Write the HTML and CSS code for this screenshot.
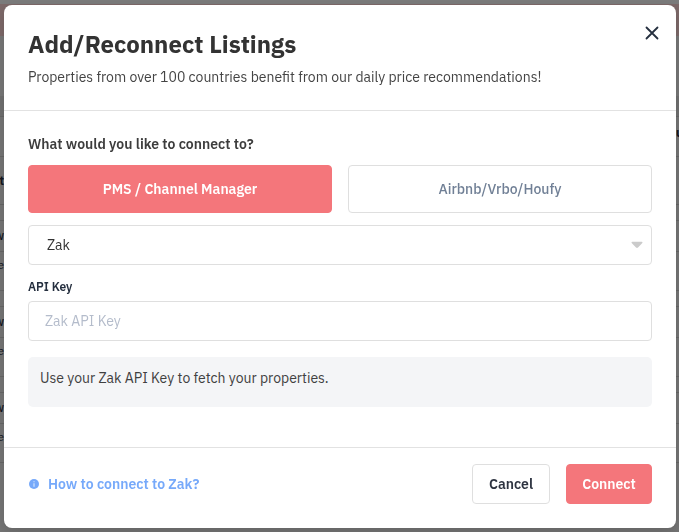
FILE: index.html
```html
<!DOCTYPE html>
<html lang="en">
<head>
    <meta charset="UTF-8">
    <meta name="viewport" content="width=device-width, initial-scale=1.0">
    <title>Add/Reconnect Listings</title>
    <link rel="stylesheet" href="styles.css">
</head>
<body>
    <div class="page">
        <div class="topbar"></div>
        <div class="banner"></div>
        <div class="toolbar"></div>
        <div class="filters"><span>u</span></div>
        <div class="gap"></div>
        <div class="table-head"><span>t</span></div>
        <div class="gap"></div>
        <div class="row name"><span>w</span></div>
        <div class="row"><span>e</span></div>
        <div class="gap"></div>
        <div class="row name"><span>w</span></div>
        <div class="row"><span>e</span></div>
        <div class="gap"></div>
        <div class="row name"><span>w</span></div>
        <div class="row"><span>e</span></div>
    </div>
    <div class="overlay">
        <div class="modal">
            <div class="modal-header">
                <div>
                    <h1>Add/Reconnect Listings</h1>
                    <p>Properties from over 100 countries benefit from our daily price recommendations!</p>
                </div>
                <button class="close" aria-label="Close">
                    <svg width="14" height="14" viewBox="0 0 14 14"><path d="M1.5 1.5l11 11M12.5 1.5l-11 11" stroke="#252f3f" stroke-width="1.8" stroke-linecap="round"/></svg>
                </button>
            </div>
            <div class="modal-body">
                <h2>What would you like to connect to?</h2>
                <div class="tabs">
                    <button class="tab active"><span>PMS / Channel Manager</span></button>
                    <button class="tab"><span>Airbnb/Vrbo/Houfy</span></button>
                </div>
                <div class="select">
                    <span>Zak</span>
                    <svg width="12" height="8" viewBox="0 0 12 8"><path d="M1.3.7h9.4q1.2.2.6 1.3L7 6.6q-1 .9-2 0L.7 2Q.1.9 1.3.7z" fill="#cbcbcb"/></svg>
                </div>
                <label class="field-label" for="apiKey"><span>API Key</span></label>
                <input id="apiKey" class="field" type="text" placeholder="Zak API Key">
                <div class="note"><span>Use your Zak API Key to fetch your properties.</span></div>
            </div>
            <div class="modal-footer">
                <a class="help" href="#">
                    <svg width="10" height="10" viewBox="0 0 10 10"><circle cx="5" cy="5" r="5" fill="#76a9fa"/><path d="M5 2.2v1M5 4.2v3.5" stroke="#c9dffd" stroke-width="1.3"/></svg>
                    <span>How to connect to Zak?</span>
                </a>
                <div class="actions">
                    <button class="btn cancel"><span>Cancel</span></button>
                    <button class="btn connect"><span>Connect</span></button>
                </div>
            </div>
        </div>
    </div>
</body>
</html>
```

FILE: styles.css
```css
* {
    box-sizing: border-box;
}
body {
    margin: 0;
    height: 532px;
    overflow: hidden;
    font-family: "IBM Plex Sans", Roboto, "Liberation Sans", sans-serif;
    font-size: 14px;
    color: #374151;
    background-color: #757575;
}
h1, h2, p {
    margin: 0;
}
button {
    font-family: inherit;
    cursor: pointer;
}
/* listings page behind the modal */
.page {
    font-size: 12px;
    line-height: 16px;
    color: #14171f;
}
.page span {
    display: flex;
    justify-content: flex-end;
    width: 4px;
}
.topbar {
    height: 4px;
    background-color: #7b7b7b;
}
.banner {
    height: 32px;
    background-color: #7d6969;
}
.toolbar {
    height: 81px;
    background: linear-gradient(#777 60px, #707070 60px);
    border-bottom: 1px solid #666;
}
.filters {
    height: 31px;
    padding-top: 8px;
}
.page .filters span {
    width: 3px;
    margin-left: auto;
    justify-content: flex-start;
    font-weight: bold;
}
.gap {
    height: 9px;
    border-bottom: 1px solid #666;
}
.table-head {
    height: 48px;
    padding-top: 16px;
    font-weight: bold;
    border-bottom: 1px solid #656565;
}
.table-head + .gap, .row + .gap {
    height: 16px;
}
.row {
    height: 39px;
    padding-top: 5px;
    border-bottom: 1px solid #666;
}
.row.name {
    height: 31px;
    padding-top: 7px;
    font-weight: 500;
}
.overlay {
    position: fixed;
    inset: 0;
    padding: 5px 3px 4px 4px;
}
.modal {
    height: 523px;
    display: flex;
    flex-direction: column;
    background-color: #fff;
    border-radius: 8px;
    box-shadow: 0 4px 12px rgba(0, 0, 0, 0.15);
}
.modal-header {
    height: 106px;
    padding: 23px 24px;
    display: flex;
    justify-content: space-between;
    border-bottom: 1px solid #e2e2e2;
}
h1 {
    font-size: 24px;
    line-height: 32px;
    font-weight: 700;
    color: #333;
    white-space: nowrap;
}
.modal-header p {
    margin-top: 7px;
    line-height: 20px;
    color: #444;
    white-space: nowrap;
}
.close {
    align-self: flex-start;
    display: flex;
    margin: -2px -7px 0 0;
    padding: 0;
    border: none;
    background: none;
}
.modal-body {
    height: 336px;
    padding: 23px 24px 0;
    display: flex;
    flex-direction: column;
}
h2 {
    font-size: 14px;
    line-height: 20px;
    font-weight: 600;
    color: #3d3d3d;
}
.tabs {
    display: grid;
    grid-template-columns: 1fr 1fr;
    gap: 16px;
    margin-top: 11px;
}
.tab {
    height: 48px;
    padding: 0;
    font-size: 14px;
    font-weight: 500;
    color: #718096;
    background-color: #fff;
    border: 1px solid #dfdfdf;
    border-radius: 4px;
}
.tab.active {
    font-weight: 600;
    color: #fff;
    background-color: #f4767b;
    border-color: #f4767b;
}
.select {
    height: 40px;
    margin-top: 12px;
    padding: 0 8px 0 18px;
    display: flex;
    align-items: center;
    justify-content: space-between;
    color: #333;
    border: 1px solid #dfdfdf;
    border-radius: 4px;
}
.field-label {
    margin-top: 14px;
    font-size: 12px;
    line-height: 16px;
    font-weight: 600;
    color: #252f3f;
}
.field {
    height: 40px;
    margin-top: 6px;
    padding: 0 16px;
    font-family: inherit;
    font-size: 14px;
    border: 1px solid #dfdfdf;
    border-radius: 4px;
}
.field::placeholder {
    color: #b4bccb;
}
.note {
    height: 50px;
    margin-top: 16px;
    padding: 11px 12px;
    line-height: 20px;
    color: #404040;
    background-color: #f4f5f7;
    border-radius: 5px;
}
.modal-footer {
    height: 81px;
    padding: 16px 24px 24px;
    display: flex;
    align-items: center;
    justify-content: space-between;
    border-top: 1px solid #e2e2e2;
}
.help {
    display: flex;
    align-items: center;
    gap: 9px;
    padding-left: 1px;
    font-weight: 600;
    color: #76a9fa;
    text-decoration: none;
}
.actions {
    display: flex;
    gap: 16px;
}
.btn {
    height: 40px;
    padding: 0;
    font-size: 14px;
    font-weight: 600;
    border-radius: 4px;
}
.cancel {
    width: 78px;
    color: #2d3340;
    background-color: #fff;
    border: 1px solid #dfdfdf;
}
.connect {
    width: 86px;
    color: #fff;
    background-color: #f4767b;
    border: 1px solid #f4767b;
}
```
